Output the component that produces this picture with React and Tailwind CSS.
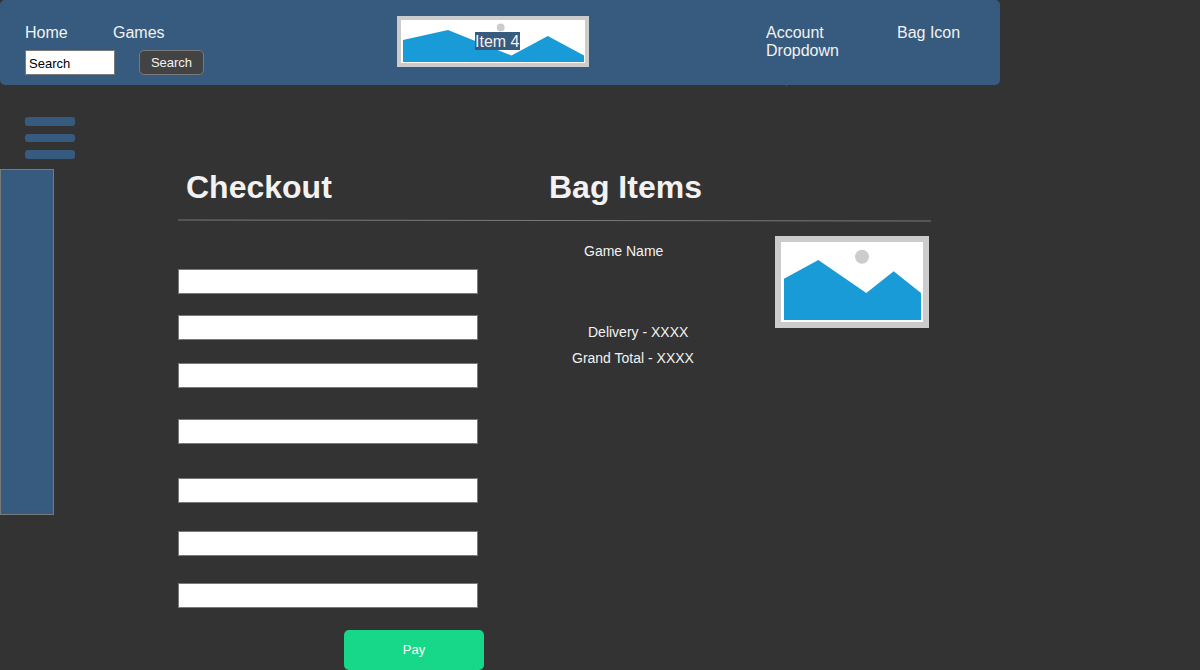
const FIELDS = [
  { id: "name", gap: "mt-0" },
  { id: "email", gap: "mt-[21px]" },
  { id: "phone", gap: "mt-[23px]" },
  { id: "address", gap: "mt-[31px]" },
  { id: "city", gap: "mt-[34px]" },
  { id: "postcode", gap: "mt-[28px]" },
  { id: "card", gap: "mt-[27px]" },
];

function Logo() {
  return (
    <div className="relative mt-4 ml-[193px] h-[51px] w-[192px] shrink-0">
      <svg className="block" width="192" height="51" viewBox="0 0 192 51">
        <rect width="192" height="51" fill="#cccccc" />
        <rect x="4" y="4" width="184" height="43" fill="#ffffff" />
        <circle cx="103.7" cy="11.4" r="3.9" fill="#cccccc" />
        <path d="M6 24 51 14 114.5 39.5 150.8 20 187 39.5V46H6Z" fill="#199bd7" />
      </svg>
      <span className="absolute top-4 left-[78px] h-[18px] w-[45px] bg-[#375b7f] leading-5 whitespace-nowrap">
        Item 4
      </span>
    </div>
  );
}

function Header() {
  return (
    <header className="relative flex h-[85px] w-[1000px] items-start rounded-[5px] bg-[#375b7f] text-base leading-[18px]">
      <div className="mt-6 ml-[25px] w-[179px]">
        <nav className="flex h-[26px]">
          <a className="w-[88px]">Home</a>
          <a>Games</a>
        </nav>
        <div className="flex justify-between">
          <input
            className="h-[25px] w-[90px] border border-[#797979] bg-white px-[3px] pt-[2px] text-[13px] text-black outline-none"
            defaultValue="Search"
          />
          <button className="h-[25px] w-[65px] rounded-[5px] border border-[#797979] bg-[#434343] text-[13px] leading-[15px]">
            Search
          </button>
        </div>
      </div>
      <Logo />
      <div className="mt-6 ml-[177px] w-[131px]">
        Account
        <br />
        Dropdown
      </div>
      <div className="mt-6">Bag Icon</div>
      <span className="absolute top-[85px] left-[786px] h-px w-px bg-[#375b7f]" />
    </header>
  );
}

function Sidebar() {
  return (
    <aside className="w-[178px] shrink-0 pt-8">
      <div className="ml-[25px] flex h-[42px] w-[50px] flex-col justify-between">
        <span className="h-[9px] rounded-[3px] bg-[#375b7f]" />
        <span className="h-[8px] rounded-[3px] bg-[#375b7f]" />
        <span className="h-[9px] rounded-[3px] bg-[#375b7f]" />
      </div>
      <div className="mt-[10px] h-[346px] w-[54px] border border-[#797979] bg-[#375b7f]" />
    </aside>
  );
}

function GameImage() {
  return (
    <svg className="mt-[14px] ml-auto mr-[2px] block shrink-0" width="154" height="92" viewBox="0 0 154 92">
      <rect width="154" height="92" fill="#cccccc" />
      <rect x="6" y="6" width="142" height="80" fill="#ffffff" />
      <circle cx="87" cy="20.7" r="7" fill="#cccccc" />
      <path d="M9 42.7 43.3 24 91.3 57 118.7 35.2 146 57V84H9Z" fill="#199bd7" />
    </svg>
  );
}

export default function App() {
  return (
    <div className="h-[670px] w-full overflow-hidden bg-[#333333] font-['Liberation_Sans',Arial,sans-serif] text-[#f2f2f2]">
      <Header />
      <div className="flex items-start">
        <Sidebar />
        <main className="w-[753px] pt-[84px]">
          <div className="flex h-[50px] text-[32px] leading-[37px] font-bold">
            <h1 className="w-[363px] pl-2">Checkout</h1>
            <h1 className="pl-2">Bag Items</h1>
          </div>
          <svg className="block" width="753" height="3" viewBox="0 0 753 3">
            <line x1="0" y1="1" x2="753" y2="2" stroke="#797979" />
          </svg>
          <div className="flex items-start">
            <form className="flex w-[306px] flex-col pt-[47px]">
              {FIELDS.map((field) => (
                <input
                  key={field.id}
                  className={`h-[25px] w-[300px] shrink-0 border border-[#797979] bg-white px-1 text-[13px] text-black outline-none ${field.gap}`}
                />
              ))}
              <button
                type="button"
                className="mt-[22px] h-10 w-[140px] self-end rounded-[5px] bg-[#17d788] pb-[2px] text-[13px] leading-[15px] text-white"
              >
                Pay
              </button>
            </form>
            <div className="ml-[88px] w-[140px] text-sm leading-4">
              <p className="mt-[21px] pl-3">Game Name</p>
              <p className="mt-[65px] pl-4">Delivery - XXXX</p>
              <p className="mt-[10px]">Grand Total - XXXX</p>
            </div>
            <GameImage />
          </div>
        </main>
      </div>
    </div>
  );
}
